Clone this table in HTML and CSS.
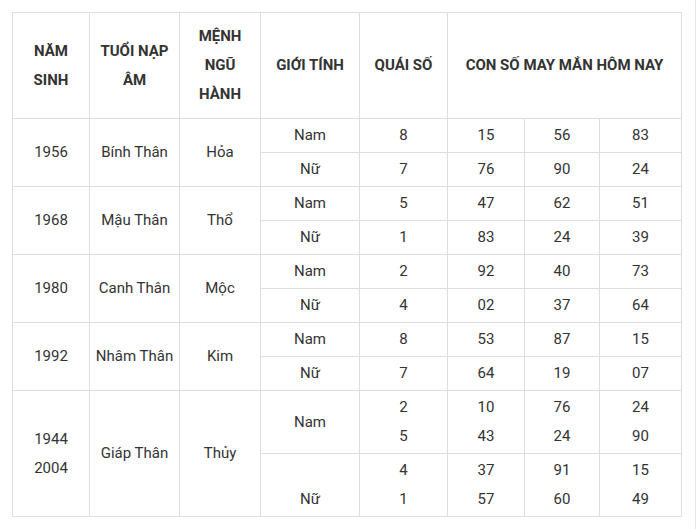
FILE: index.html
```html
<!DOCTYPE html>
<html lang="vi">
<head>
<meta charset="utf-8">
<link rel="stylesheet" href="styles.css">
</head>
<body>
<div class="page">
  <table class="lucky">
    <colgroup>
      <col class="c1"><col class="c2"><col class="c3"><col class="c4"><col class="c5"><col class="c6"><col class="c7"><col class="c8">
    </colgroup>
    <thead>
      <tr>
        <th>NĂM<br>SINH</th>
        <th>TUỔI NẠP<br>ÂM</th>
        <th>MỆNH<br>NGŨ<br>HÀNH</th>
        <th>GIỚI TÍNH</th>
        <th>QUÁI SỐ</th>
        <th colspan="3">CON SỐ MAY MẮN HÔM NAY</th>
      </tr>
    </thead>
    <tbody>
      <tr><td rowspan="2">1956</td><td rowspan="2">Bính Thân</td><td rowspan="2">Hỏa</td><td>Nam</td><td>8</td><td>15</td><td>56</td><td>83</td></tr>
      <tr><td>Nữ</td><td>7</td><td>76</td><td>90</td><td>24</td></tr>
      <tr><td rowspan="2">1968</td><td rowspan="2">Mậu Thân</td><td rowspan="2">Thổ</td><td>Nam</td><td>5</td><td>47</td><td>62</td><td>51</td></tr>
      <tr><td>Nữ</td><td>1</td><td>83</td><td>24</td><td>39</td></tr>
      <tr><td rowspan="2">1980</td><td rowspan="2">Canh Thân</td><td rowspan="2">Mộc</td><td>Nam</td><td>2</td><td>92</td><td>40</td><td>73</td></tr>
      <tr><td>Nữ</td><td>4</td><td>02</td><td>37</td><td>64</td></tr>
      <tr><td rowspan="2">1992</td><td rowspan="2">Nhâm Thân</td><td rowspan="2">Kim</td><td>Nam</td><td>8</td><td>53</td><td>87</td><td>15</td></tr>
      <tr><td>Nữ</td><td>7</td><td>64</td><td>19</td><td>07</td></tr>
      <tr><td rowspan="2">1944<br>2004</td><td rowspan="2">Giáp Thân</td><td rowspan="2">Thủy</td><td>Nam</td><td>2<br>5</td><td>10<br>43</td><td>76<br>24</td><td>24<br>90</td></tr>
      <tr><td><br>Nữ</td><td>4<br>1</td><td>37<br>57</td><td>91<br>60</td><td>15<br>49</td></tr>
    </tbody>
  </table>
</div>
</body>
</html>
```

FILE: styles.css
```css
html, body {
  margin: 0;
  padding: 0;
  background: #fff;
}
body {
  font-family: Roboto, "Liberation Sans", Arial, sans-serif;
  color: #333;
  font-size: 15px;
}
.page {
  width: 696px;
  height: 529px;
  box-sizing: border-box;
  border-right: 1px solid #e3e3e3;
  padding: 12px 0 0 12px;
}
.lucky {
  border-collapse: collapse;
  table-layout: fixed;
  width: 669px;
}
.c1 { width: 77px; }
.c2 { width: 90px; }
.c3 { width: 81px; }
.c4 { width: 99px; }
.c5 { width: 88px; }
.c6 { width: 77px; }
.c7 { width: 75px; }
.c8 { width: 82px; }
.lucky th,
.lucky td {
  border: 1px solid #dedede;
  text-align: center;
  vertical-align: middle;
  line-height: 29px;
}
.lucky th {
  font-weight: 700;
  padding: 9px 4px;
  color: #333;
}
.lucky td {
  padding: 2px 4px;
}
```
